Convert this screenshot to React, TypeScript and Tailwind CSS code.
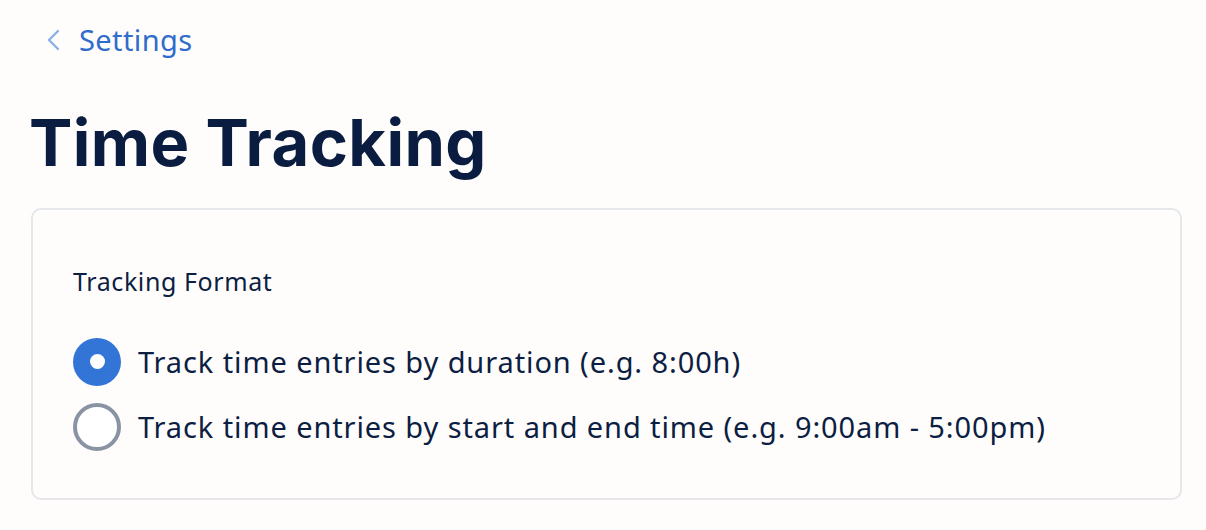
import { useState } from 'react';

const OPTIONS = [
  { id: 'duration', label: 'Track time entries by duration (e.g. 8:00h)' },
  { id: 'range', label: 'Track time entries by start and end time (e.g. 9:00am - 5:00pm)' },
];

function Radio({ checked }: { checked: boolean }) {
  return checked ? (
    <span className="flex h-[48px] w-[48px] shrink-0 items-center justify-center rounded-full bg-[#3374d7]">
      <span className="h-[15px] w-[15px] rounded-full bg-white" />
    </span>
  ) : (
    <span className="h-[48px] w-[48px] shrink-0 rounded-full border-[4px] border-[#8a93a3] bg-white" />
  );
}

export default function App() {
  const [format, setFormat] = useState('duration');

  return (
    <div className="min-h-[530px] bg-[#fefdfc] pt-[18px] font-['Noto_Sans',sans-serif] text-[#0c1e42]">
      <a href="#" className="ml-[46px] flex w-fit items-center gap-[18px] text-[29px] tracking-[0.4px] text-[#2f6ccb]">
        <svg width="15" height="22" viewBox="0 0 15 22" fill="none" className="text-[#8cb0e6]">
          <path d="M12 2L3 11l9 9" stroke="currentColor" strokeWidth="2.4" strokeLinecap="round" strokeLinejoin="round" />
        </svg>
        Settings
      </a>

      <h1 className="ml-[29px] mt-[48px] font-['Inter',sans-serif] text-[65px] font-bold leading-none tracking-[0.4px] text-[#0a1d41]">
        Time Tracking
      </h1>

      <section className="ml-[31px] mt-[33px] w-[1151px] rounded-[10px] border-2 border-[#e5e7eb] bg-[#fefdfc] px-[40px] pb-[47px] pt-[59px]">
        <h2 className="text-[25px] leading-none tracking-[0.6px]">Tracking Format</h2>
        <div className="mt-[44px] flex flex-col gap-[17px]">
          {OPTIONS.map((o) => (
            <label key={o.id} className="flex cursor-pointer items-center gap-[17px]" onClick={() => setFormat(o.id)}>
              <Radio checked={format === o.id} />
              <span className="text-[29px] leading-none tracking-[0.9px]">{o.label}</span>
            </label>
          ))}
        </div>
      </section>
    </div>
  );
}
